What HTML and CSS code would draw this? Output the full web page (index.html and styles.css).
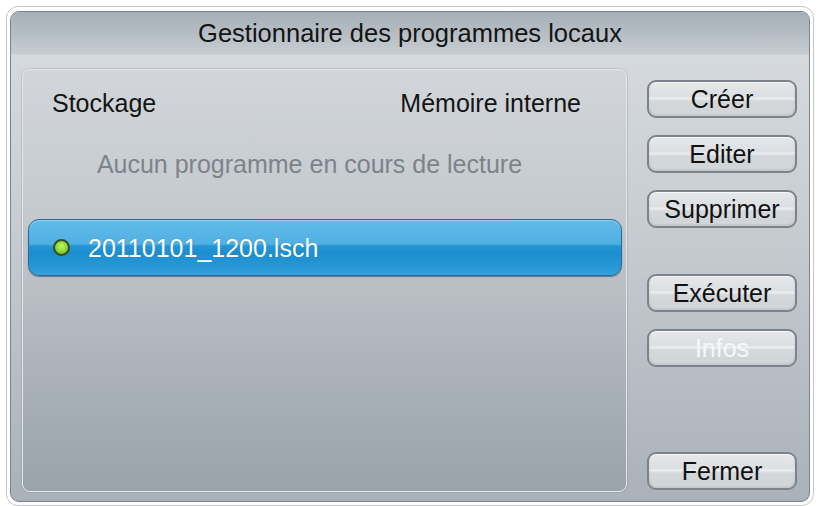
FILE: index.html
```html
<!DOCTYPE html>
<html lang="fr">
<head>
<meta charset="utf-8">
<title>Gestionnaire des programmes locaux</title>
<link rel="stylesheet" href="styles.css">
</head>
<body>
<div class="dialog">
  <div class="frame">
    <div class="titlebar">Gestionnaire des programmes locaux</div>
    <div class="content">
      <section class="panel">
        <div class="storage">
          <span>Stockage</span>
          <span>Mémoire interne</span>
        </div>
        <div class="status">Aucun programme en cours de lecture</div>
        <div class="item selected">
          <span class="dot"></span>
          <span class="name">20110101_1200.lsch</span>
        </div>
      </section>
      <div class="actions">
        <button class="btn">Créer</button>
        <button class="btn">Editer</button>
        <button class="btn">Supprimer</button>
        <button class="btn group">Exécuter</button>
        <button class="btn disabled">Infos</button>
        <button class="btn close">Fermer</button>
      </div>
    </div>
  </div>
</div>
</body>
</html>
```

FILE: styles.css
```css
* { box-sizing: border-box; }

html, body {
  margin: 0;
  background: #ffffff;
  font-family: "Liberation Sans", Arial, sans-serif;
}

body {
  padding: 6px 4px 0 6px;
  width: 818px;
  height: 506px;
  overflow: hidden;
}

.dialog {
  width: 808px;
  height: 500px;
  border: 1px solid #c3c7cb;
  border-radius: 12px;
  padding: 4px 3px 3px 3px;
  background: #ffffff;
}

.frame {
  height: 100%;
  border: 1px solid #7b838b;
  border-radius: 9px;
  overflow: hidden;
  display: flex;
  flex-direction: column;
  background: linear-gradient(#d9dde0 0%, #c9ced3 40%, #aab1b8 100%);
}

.titlebar {
  height: 43px;
  flex: none;
  display: flex;
  align-items: center;
  justify-content: center;
  font-size: 25.5px;
  color: #141414;
  background: linear-gradient(#a6afb8 0%, #b7bec5 55%, #c7cdd2 100%);
  border-bottom: 1px solid #cdd2d6;
}

.content {
  flex: 1;
  display: flex;
  gap: 20px;
  padding: 14px 12px 9px 11px;
}

.panel {
  width: 605px;
  flex: none;
  border-radius: 8px;
  border: 1px solid #e4e7ea;
  box-shadow: 0 0 0 1px rgba(120, 128, 136, 0.25);
  background: linear-gradient(#d2d6da 0%, #c4c9ce 35%, #a9b0b7 75%, #9aa2aa 100%);
  padding-top: 18px;
}

.storage {
  display: flex;
  justify-content: space-between;
  padding: 0 45px 0 29px;
  font-size: 25px;
  line-height: 30px;
  color: #141414;
}

.status {
  margin-top: 31px;
  padding: 0 52px 0 22px;
  text-align: center;
  font-size: 25px;
  line-height: 30px;
  color: #7d838a;
}

.item {
  margin: 40px 4px 0 5px;
  height: 57px;
  display: flex;
  align-items: center;
  padding-left: 24px;
  gap: 18px;
  font-size: 25px;
  line-height: 30px;
  color: #ffffff;
}

.item.selected {
  border: 1px solid #2a6a98;
  border-radius: 11px;
  background:
    linear-gradient(#62bbe8 0%, #4fb0e2 44%, #2496d4 47%, #1c8ecf 60%, #2b9ad8 92%, #3aa3de 100%);
  box-shadow: 0 1px 1px rgba(20, 60, 90, 0.55), inset 0 1px 0 rgba(255, 255, 255, 0.35);
}

.dot {
  width: 17px;
  height: 17px;
  border-radius: 50%;
  flex: none;
  border: 2px solid #34501f;
  background: radial-gradient(circle at 50% 40%, #c8f56e 0%, #94dc3c 45%, #62b21e 100%);
}

.name {
  text-shadow: 0 0 1px rgba(0, 40, 80, 0.25);
}

.actions {
  width: 150px;
  flex: none;
  display: flex;
  flex-direction: column;
  gap: 17px;
  padding: 11px 0 2px 0;
}

.btn {
  height: 38px;
  width: 150px;
  flex: none;
  border: 2px solid #7c838a;
  border-radius: 9px;
  font-family: "Liberation Sans", Arial, sans-serif;
  font-size: 25px;
  line-height: 30px;
  padding: 0;
  color: #111111;
  background: linear-gradient(#e6e8ea 0%, #dcdfe2 42%, #eceef0 48%, #d5d8db 56%, #d2d5d8 85%, #dfe1e3 100%);
  box-shadow: inset 0 1px 0 rgba(255, 255, 255, 0.6), inset 0 -2px 2px rgba(120, 126, 132, 0.25);
}

.btn.group { margin-top: 29px; }

.btn.disabled { color: #f6f7f8; }

.btn.close { margin-top: auto; }
```
